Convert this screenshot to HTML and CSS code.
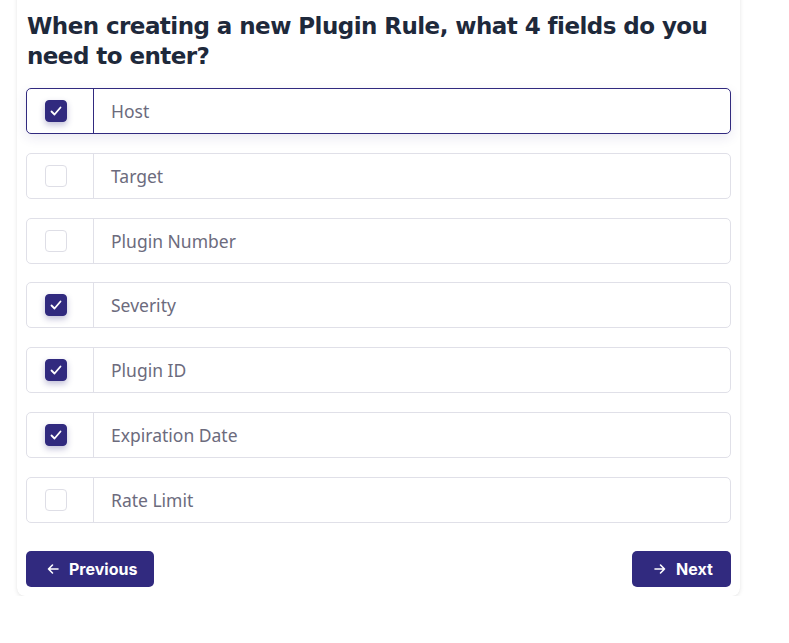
FILE: index.html
```html
<!DOCTYPE html>
<html>
<head>
<meta charset="utf-8">
<link rel="stylesheet" href="styles.css">
</head>
<body>
<div class="page">
  <div class="card">
    <h1 class="question">When creating a new Plugin Rule, what 4 fields do you need to enter?</h1>
    <div class="options">
      <div class="option selected">
        <div class="check-cell"><span class="box checked"><svg viewBox="0 0 22 22" width="22" height="22"><path d="M6.5 11.5 L9.5 14.5 L15.5 7.5" fill="none" stroke="#fff" stroke-width="1.8" stroke-linecap="round" stroke-linejoin="round"/></svg></span></div>
        <div class="label">Host</div>
      </div>
      <div class="option">
        <div class="check-cell"><span class="box"></span></div>
        <div class="label">Target</div>
      </div>
      <div class="option">
        <div class="check-cell"><span class="box"></span></div>
        <div class="label">Plugin Number</div>
      </div>
      <div class="option">
        <div class="check-cell"><span class="box checked"><svg viewBox="0 0 22 22" width="22" height="22"><path d="M6.5 11.5 L9.5 14.5 L15.5 7.5" fill="none" stroke="#fff" stroke-width="1.8" stroke-linecap="round" stroke-linejoin="round"/></svg></span></div>
        <div class="label">Severity</div>
      </div>
      <div class="option">
        <div class="check-cell"><span class="box checked"><svg viewBox="0 0 22 22" width="22" height="22"><path d="M6.5 11.5 L9.5 14.5 L15.5 7.5" fill="none" stroke="#fff" stroke-width="1.8" stroke-linecap="round" stroke-linejoin="round"/></svg></span></div>
        <div class="label">Plugin ID</div>
      </div>
      <div class="option">
        <div class="check-cell"><span class="box checked"><svg viewBox="0 0 22 22" width="22" height="22"><path d="M6.5 11.5 L9.5 14.5 L15.5 7.5" fill="none" stroke="#fff" stroke-width="1.8" stroke-linecap="round" stroke-linejoin="round"/></svg></span></div>
        <div class="label">Expiration Date</div>
      </div>
      <div class="option">
        <div class="check-cell"><span class="box"></span></div>
        <div class="label">Rate Limit</div>
      </div>
    </div>
    <div class="nav">
      <button class="btn prev"><svg viewBox="0 0 14 14" width="14" height="14"><path d="M12 7 H2.5 M6.5 3 L2.5 7 L6.5 11" fill="none" stroke="#fff" stroke-width="1.6" stroke-linecap="round" stroke-linejoin="round"/></svg><span>Previous</span></button>
      <button class="btn next"><svg viewBox="0 0 14 14" width="14" height="14"><path d="M2 7 H11.5 M7.5 3 L11.5 7 L7.5 11" fill="none" stroke="#fff" stroke-width="1.6" stroke-linecap="round" stroke-linejoin="round"/></svg><span>Next</span></button>
    </div>
  </div>
</div>
</body>
</html>
```

FILE: styles.css
```css
html, body {
  margin: 0;
  padding: 0;
  background: #ffffff;
}
.page {
  padding-left: 17px;
  width: 723px;
}
.card {
  margin-top: -20px;
  background: #fff;
  border-radius: 8px;
  box-shadow: 0 1px 4px rgba(0,0,0,0.10), 0 0 1px rgba(0,0,0,0.06);
  padding: 31px 9px 9px 9px;
}
.question {
  margin: 0 0 0 1px;
  font-family: "DejaVu Sans", Inter, sans-serif;
  font-weight: 700;
  font-size: 23px;
  line-height: 30px;
  color: #1e293b;
  letter-spacing: -0.55px;
}
.options {
  margin-top: 17px;
  display: flex;
  flex-direction: column;
  gap: 18.8px;
}
.option {
  display: flex;
  height: 44px;
  border: 1px solid #e0e0e8;
  border-radius: 5px;
  background: #fff;
}
.option.selected {
  border-color: #312a7f;
  box-shadow: 0 4px 12px rgba(49,42,127,0.10);
}
.check-cell {
  width: 67px;
  display: flex;
  align-items: center;
  justify-content: center;
  border-right: 1px solid #e0e0e8;
  box-sizing: border-box;
  padding-right: 9px;
}
.option.selected .check-cell {
  border-right-color: #312a7f;
}
.box {
  width: 22px;
  height: 22px;
  box-sizing: border-box;
  border: 1px solid #dedee6;
  border-radius: 4px;
  display: block;
  background: #fff;
}
.box.checked {
  background: #312a7f;
  border-color: #312a7f;
  box-shadow: 0 3px 6px rgba(49,42,127,0.30);
}
.box svg {
  display: block;
  margin: -1px;
}
.label {
  display: flex;
  align-items: center;
  padding-left: 17px;
  font-family: "Noto Sans", "Open Sans", sans-serif;
  font-size: 17.5px;
  color: #6c6b7d;
}
.nav {
  margin-top: 28px;
  display: flex;
  justify-content: space-between;
}
.btn {
  display: flex;
  align-items: center;
  gap: 9px;
  height: 36px;
  border: none;
  border-radius: 5px;
  background: #312a7f;
  color: #fff;
  font-family: Inter, "Noto Sans", sans-serif;
  font-weight: 700;
  font-size: 16px;
  cursor: pointer;
}
.btn.prev {
  width: 128px;
  padding: 0 0 0 20px;
}
.btn.next {
  width: 99px;
  padding: 0 0 0 21px;
}
.btn svg {
  display: block;
}
```
